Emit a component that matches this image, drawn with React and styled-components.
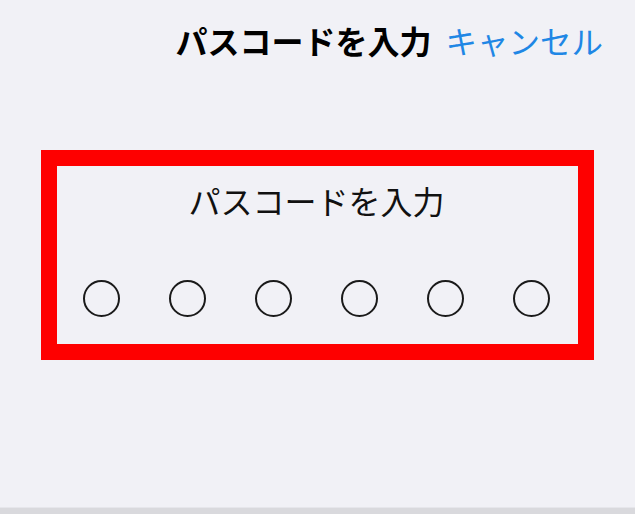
import React from 'react'
import styled, { createGlobalStyle } from 'styled-components'

const GlobalStyle = createGlobalStyle`
  html, body {
    margin: 0;
    padding: 0;
    background: #f1f1f6;
  }
  body {
    font-family: "Noto Sans CJK JP", "Noto Sans", sans-serif;
  }
`

const Screen = styled.div`
  height: 100vh;
  display: flex;
  flex-direction: column;
  background: #f1f1f6;
`

const Header = styled.div`
  height: 80px;
  display: flex;
  justify-content: flex-end;
  align-items: center;
  gap: 14px;
  padding-right: 32px;
`

const Title = styled.h1`
  margin: 0;
  font-size: 32px;
  font-weight: 700;
  color: #000;
  line-height: 40px;
`

const Cancel = styled.button`
  border: none;
  background: none;
  padding: 0;
  font-family: inherit;
  font-size: 31.5px;
  line-height: 40px;
  color: #1f87e5;
  cursor: pointer;
`

const Body = styled.div`
  flex: 1;
  padding-top: 70px;
  padding-left: 41px;
`

const HighlightBox = styled.div`
  width: 553px;
  box-sizing: border-box;
  border: 16px solid #fe0000;
  padding: 14px 0 27px;
  display: flex;
  flex-direction: column;
  align-items: center;
`

const Prompt = styled.div`
  font-size: 32px;
  line-height: 40px;
  color: #111;
  margin-bottom: 60px;
  margin-right: 2px;
`

const Dots = styled.div`
  display: flex;
  gap: 49px;
  margin-right: 2px;
`

const Dot = styled.span`
  width: 33px;
  height: 33px;
  border-radius: 50%;
  border: 2px solid ${(p) => (p.filled ? '#111' : '#1a1a1a')};
  background: ${(p) => (p.filled ? '#111' : 'transparent')};
`

const BottomBar = styled.div`
  height: 6px;
  background: #d9d9dd;
  border-top: 1px solid #e6e6eb;
`

export default function App() {
  const digits = [0, 1, 2, 3, 4, 5]
  return (
    <Screen>
      <GlobalStyle />
      <Header>
        <Title>パスコードを入力</Title>
        <Cancel>キャンセル</Cancel>
      </Header>
      <Body>
        <HighlightBox>
          <Prompt>パスコードを入力</Prompt>
          <Dots>
            {digits.map((d) => (
              <Dot key={d} filled={false} />
            ))}
          </Dots>
        </HighlightBox>
      </Body>
      <BottomBar />
    </Screen>
  )
}
